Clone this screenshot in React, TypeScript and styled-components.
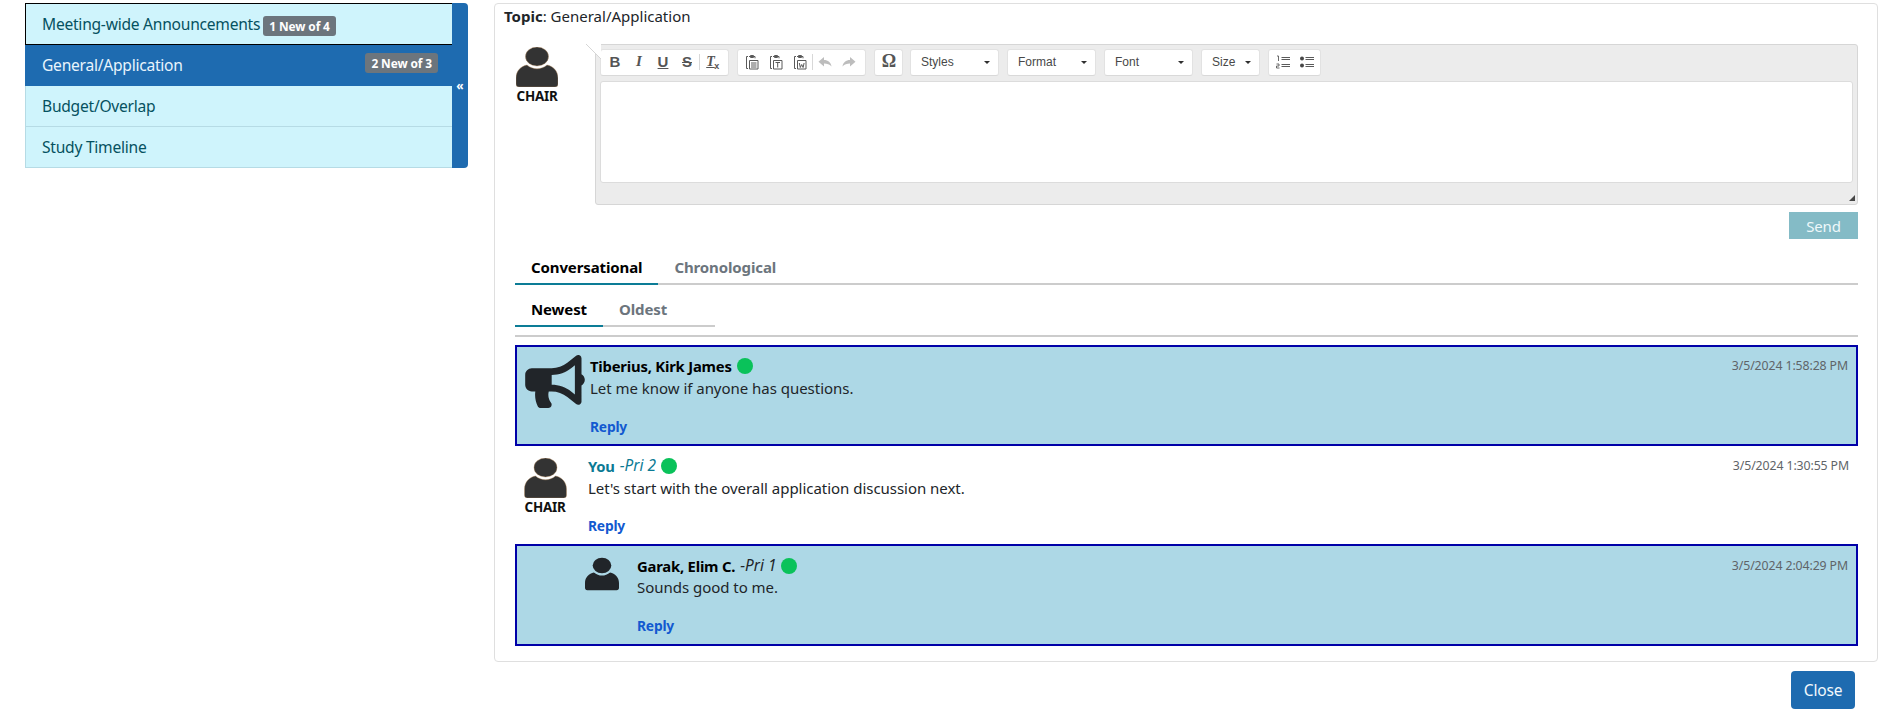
import React from "react";
import styled, { createGlobalStyle } from "styled-components";
import { FaBullhorn } from "react-icons/fa";

const Global = createGlobalStyle`
  html, body { margin: 0; padding: 0; background: #fff; }
  body { font-family: "Noto Sans", "Open Sans", sans-serif; color: #212529; font-size: 15px; }
  * { box-sizing: border-box; }
`;

const Page = styled.div`
  display: flex;
  align-items: flex-start;
  gap: 26px;
  padding: 3px 22px 0 25px;
`;
const Sidebar = styled.aside`
  display: flex;
  width: 443px;
  height: 165px;
`;
const TopicList = styled.div`
  flex: 1;
  display: flex;
  flex-direction: column;
`;
const TopicItem = styled.div<{ $active?: boolean; $focus?: boolean }>`
  height: ${p => (p.$focus ? 42 : 41)}px;
  display: flex;
  align-items: center;
  padding: 0 0 0 16px;
  font-size: 15.6px;
  letter-spacing: -0.25px;
  background: ${p => (p.$active ? "#1e6bb0" : "#cff4fc")};
  color: ${p => (p.$active ? "#e8f4fc" : "#055160")};
  border: 1px solid ${p => (p.$focus ? "#000" : p.$active ? "#1e6bb0" : "#b6dbe5")};
  border-top-width: ${p => (p.$focus ? 1 : 0)}px;
  border-right-width: 0;
  gap: 3px;
  justify-content: ${p => (p.$active ? "space-between" : "flex-start")};
`;
const Badge = styled.span<{ $inset?: boolean }>`
  display: inline-block;
  background: #6c757d;
  color: #fff;
  font-weight: 700;
  font-size: 11.9px;
  letter-spacing: -0.1px;
  line-height: 20px;
  height: 20px;
  padding: 0 6px;
  border-radius: 3px;
  margin: ${p => (p.$inset ? "-4px 14px 0 0" : "3px 0 0 0")};
`;
const Rail = styled.button`
  width: 16px;
  border: 0;
  padding: 0;
  background: #1e6bb0;
  color: #fff;
  border-radius: 0 4px 4px 0;
  font: 700 12px "Noto Sans", sans-serif;
  line-height: 1;
`;
const Main = styled.main`
  flex: 1;
  min-width: 0;
`;
const Panel = styled.section`
  height: 659px;
  border: 1px solid #dfdfdf;
  border-radius: 4px;
  padding: 0 19px 0 20px;
`;
const Topic = styled.div`
  height: 40px;
  padding: 2px 0 0 0;
  margin-left: -11px;
  font-size: 15px;
  line-height: 20px;
`;
const ComposeRow = styled.div`
  display: flex;
`;
const ChairBlock = styled.div`
  width: 80px;
  flex: none;
  padding-top: 3px;
`;
const ChairInner = styled.div<{ $mt?: number; $ml?: number }>`
  width: 42px;
  margin: ${p => p.$mt ?? 0}px 0 0 ${p => p.$ml ?? 1}px;
  display: flex;
  flex-direction: column;
  align-items: center;
`;
const ChairLabel = styled.div`
  font-weight: 700;
  font-size: 13.4px;
  letter-spacing: -0.25px;
  line-height: 14px;
  color: #111;
  margin-top: 2px;
`;
const Editor = styled.div`
  position: relative;
  flex: 1;
  height: 161px;
  background: #ececec;
  border: 1px solid #d6d6d6;
  border-radius: 3px;
  padding: 4px 4px 0 4px;
  display: flex;
  flex-direction: column;
`;
const Tip = styled.div`
  position: absolute;
  left: -11px;
  top: -1px;
  width: 16px;
  height: 15px;
  background: linear-gradient(45deg, transparent 49%, #d6d6d6 49%, #d6d6d6 53%, #fff 53%);
`;
const Toolbar = styled.div`
  display: flex;
  gap: 8px;
  height: 27px;
`;
const Group = styled.div<{ $w: number }>`
  width: ${p => p.$w}px;
  height: 27px;
  background: #fff;
  border: 1px solid #e2e2e2;
  border-bottom-color: #d9d9d9;
  border-radius: 3px;
  display: flex;
  align-items: center;
  padding: 0 0 2px 2px;
`;
const Tool = styled.span<{ $faded?: boolean }>`
  width: 24px;
  height: 23px;
  flex: none;
  display: flex;
  align-items: center;
  justify-content: center;
  color: ${p => (p.$faded ? "#bdbdbd" : "#555")};
`;
const Glyph = styled.span<{ $u?: boolean; $s?: boolean }>`
  font: 700 15px "Liberation Sans", sans-serif;
  text-decoration: ${p => (p.$u ? "underline" : p.$s ? "line-through" : "none")};
`;
const SlabGlyph = styled.span`
  font: italic 700 15px "Liberation Serif", serif;
`;
const ClearGlyph = styled.span`
  font: italic 700 14px "Liberation Serif", serif;
  position: relative;
  text-decoration: underline;
  margin-right: 3px;
  & > sub {
    position: absolute;
    left: 8px;
    top: 7px;
    font: 700 9px "Liberation Sans", sans-serif;
    text-decoration: none;
    display: inline-block;
  }
`;
const Omega = styled.span`
  font: 700 18px "Liberation Serif", serif;
  color: #555;
`;
const Sep = styled.span`
  width: 1px;
  height: 16px;
  background: #d8d8d8;
  flex: none;
`;
const Combo = styled.div<{ $w: number; $first?: boolean }>`
  width: ${p => p.$w}px;
  height: 27px;
  margin-left: ${p => (p.$first ? -1 : 0)}px;
  background: #fff;
  border: 1px solid #e2e2e2;
  border-bottom-color: #d9d9d9;
  border-radius: 3px;
  display: flex;
  align-items: center;
  justify-content: space-between;
  padding: 0 8px 2px 10px;
  font: 12px "Liberation Sans", sans-serif;
  color: #484848;
  &::after {
    content: "";
    margin-top: 2px;
    border-left: 3px solid transparent;
    border-right: 3px solid transparent;
    border-top: 3px solid #2f2f2f;
  }
`;
const EditArea = styled.div`
  flex: none;
  margin-top: 5px;
  height: 102px;
  background: #fff;
  border: 1px solid #dcdcdc;
  border-radius: 3px;
`;
const Resize = styled.div`
  position: absolute;
  right: 2px;
  bottom: 3px;
  width: 0;
  height: 0;
  border-left: 6px solid transparent;
  border-bottom: 6px solid #474747;
`;
const SendRow = styled.div`
  display: flex;
  justify-content: flex-end;
  margin-top: 7px;
`;
const SendButton = styled.button`
  width: 69px;
  height: 27px;
  border: 0;
  background: #84bbc6;
  color: #eef8fa;
  font: 15px "Noto Sans", sans-serif;
  letter-spacing: -0.2px;
  padding: 0;
`;
const TabBar = styled.div<{ $w?: number; $mt: number }>`
  display: flex;
  height: 28px;
  margin-top: ${p => p.$mt}px;
  width: ${p => (p.$w ? `${p.$w}px` : "auto")};
  border-bottom: 2px solid #ccc;
`;
const Tab = styled.div<{ $active?: boolean; $pb: number }>`
  height: 28px;
  padding: 0 16px ${p => p.$pb}px;
  display: flex;
  align-items: center;
  font-weight: 700;
  font-size: 15px;
  letter-spacing: -0.12px;
  color: ${p => (p.$active ? "#000" : "#6c757d")};
  border-bottom: 2px solid ${p => (p.$active ? "#0c7c96" : "transparent")};
`;
const Rule = styled.div`
  height: 2px;
  background: #ccc;
  margin-top: 8px;
  margin-bottom: 8px;
`;
const Card = styled.article<{ $hl?: boolean; $h: number; $pl: number; $pt: number }>`
  display: flex;
  height: ${p => p.$h}px;
  padding: ${p => p.$pt}px 8px 0 ${p => p.$pl}px;
  background: ${p => (p.$hl ? "#add8e6" : "#fff")};
  border: 2px solid ${p => (p.$hl ? "#0000a8" : "transparent")};
`;
const AvatarCol = styled.div<{ $w: number }>`
  width: ${p => p.$w}px;
  flex: none;
`;
const CardBody = styled.div`
  flex: 1;
  min-width: 0;
`;
const CardHead = styled.div`
  display: flex;
  justify-content: space-between;
  align-items: center;
  height: 21px;
`;
const Who = styled.div`
  display: flex;
  align-items: center;
  gap: 5px;
`;
const Name = styled.span<{ $you?: boolean }>`
  font-weight: 700;
  font-size: 14.8px;
  letter-spacing: -0.2px;
  color: ${p => (p.$you ? "#0b7a94" : "#000")};
`;
const Pri = styled.span<{ $you?: boolean }>`
  font-style: italic;
  font-size: 15.4px;
  letter-spacing: 0;
  color: ${p => (p.$you ? "#0b7a94" : "#212529")};
`;
const Dot = styled.span`
  width: 16px;
  height: 16px;
  border-radius: 50%;
  background: #0ac25a;
  flex: none;
`;
const Stamp = styled.time<{ $mr?: number }>`
  font-size: 12.3px;
  letter-spacing: -0.1px;
  color: #5f6468;
  margin-right: ${p => p.$mr ?? 0}px;
`;
const Text = styled.p<{ $mt?: number }>`
  margin: ${p => p.$mt ?? 1}px 0 0;
  font-size: 15px;
  line-height: 21px;
  letter-spacing: -0.03px;
  color: #212529;
`;
const Reply = styled.a<{ $mt?: number }>`
  display: block;
  margin-top: ${p => p.$mt ?? 17}px;
  font-weight: 700;
  font-size: 13.8px;
  line-height: 20px;
  letter-spacing: -0.2px;
  color: #1259d0;
`;
const Footer = styled.div`
  display: flex;
  justify-content: flex-end;
  padding: 9px 23px 0 0;
`;
const CloseButton = styled.button`
  width: 64px;
  height: 38px;
  border: 0;
  border-radius: 4px;
  background: #1e6bb0;
  color: #f2f8fc;
  font: 15.5px "Noto Sans", sans-serif;
  letter-spacing: -0.2px;
  padding: 0;
`;
const Horn = styled(FaBullhorn)`
  display: block;
  width: 60px;
  height: 53px;
  color: #212529;
`;

const Person = ({ w, h, color, halo }: { w: number; h: number; color: string; halo?: boolean }) => (
  <svg width={w} height={h} viewBox="0 0 42 40" style={{ display: "block" }}>
    <g fill={color} stroke={halo ? "#b88a5a" : "none"} strokeWidth={halo ? 0.4 : 0}>
      <ellipse cx="21" cy="9.500" rx="11.500" ry="9.500" />
      <path d="M11 18C14 20.500 17.500 21.800 21 21.800S28 20.500 31 18C37 19 42 24 42 31V37C42 39 41 40 39 40H3C1 40 0 39 0 37V31C0 24 5 19 11 18Z" />
    </g>
  </svg>
);

const Clip = ({ kind }: { kind: "doc" | "t" | "w" }) => (
  <svg width="14" height="16" viewBox="0 0 14 16" fill="none" stroke="#5a5a5a" strokeWidth="1">
    <path d="M3 2.500H1.500v12H3M5.500 1.500h3v2h-3z" />
    <path d="M4.500 6.500h8.500v8.500H4.500z" />
    <path d="M4 2.500h6v1.800" />
    {kind === "doc" && <path d="M6 9h5.500M6 11h5.500M6 13h5.500" />}
    {kind === "t" && <path d="M6.500 8.500h4.500M8.700 8.500v5" />}
    {kind === "w" && <path d="M6.300 9l1 4.500 1.400-3 1.400 3 1-4.500" />}
  </svg>
);

const Turn = ({ flip }: { flip?: boolean }) => (
  <svg width="14" height="12" viewBox="0 0 14 12" style={flip ? { transform: "scaleX(-1)" } : undefined}>
    <path fill="#bdbdbd" d="M6 1L0.500 5.800 6 10.500V7.500c3.200 0 5.500.8 7.500 3C13 6.500 10 4 6 4z" />
  </svg>
);

const ListIcon = ({ numbered }: { numbered?: boolean }) => (
  <svg width="14" height="14" viewBox="0 0 14 14">
    <path d="M5.500 2.500H14M5.500 4.500H14M5.500 9.500H14M5.500 11.500H14" stroke="#5a5a5a" strokeWidth="1" />
    {numbered ? (
      <path d="M1 1h1.500v5M.5 9h2.500v2H.5v2h3" fill="none" stroke="#5a5a5a" strokeWidth="0.9" />
    ) : (
      <>
        <circle cx="2" cy="3.500" r="2" fill="#474747" />
        <circle cx="2" cy="10.500" r="2" fill="#474747" />
      </>
    )}
  </svg>
);

export default function App() {
  return (
    <>
      <Global />
      <Page>
        <Sidebar>
          <TopicList>
            <TopicItem $focus>
              Meeting-wide Announcements <Badge>1 New of 4</Badge>
            </TopicItem>
            <TopicItem $active>
              General/Application <Badge $inset>2 New of 3</Badge>
            </TopicItem>
            <TopicItem>Budget/Overlap</TopicItem>
            <TopicItem>Study Timeline</TopicItem>
          </TopicList>
          <Rail>«</Rail>
        </Sidebar>
        <Main>
          <Panel>
            <Topic>
              <b>Topic</b>: General/Application
            </Topic>
            <ComposeRow>
              <ChairBlock>
                <ChairInner>
                  <Person w={42} h={40} color="#333" halo />
                  <ChairLabel>CHAIR</ChairLabel>
                </ChairInner>
              </ChairBlock>
              <Editor>
                <Tip />
                <Toolbar>
                  <Group $w={129}>
                    <Tool><Glyph>B</Glyph></Tool>
                    <Tool><SlabGlyph>I</SlabGlyph></Tool>
                    <Tool><Glyph $u>U</Glyph></Tool>
                    <Tool><Glyph $s>S</Glyph></Tool>
                    <Sep />
                    <Tool><ClearGlyph>T<sub>x</sub></ClearGlyph></Tool>
                  </Group>
                  <Group $w={129}>
                    <Tool><Clip kind="doc" /></Tool>
                    <Tool><Clip kind="t" /></Tool>
                    <Tool><Clip kind="w" /></Tool>
                    <Sep />
                    <Tool $faded><Turn /></Tool>
                    <Tool $faded><Turn flip /></Tool>
                  </Group>
                  <Group $w={29}>
                    <Tool><Omega>Ω</Omega></Tool>
                  </Group>
                  <Combo $w={89} $first>Styles</Combo>
                  <Combo $w={89}>Format</Combo>
                  <Combo $w={89}>Font</Combo>
                  <Combo $w={59}>Size</Combo>
                  <Group $w={53}>
                    <Tool><ListIcon numbered /></Tool>
                    <Tool><ListIcon /></Tool>
                  </Group>
                </Toolbar>
                <EditArea />
                <Resize />
              </Editor>
            </ComposeRow>
            <SendRow>
              <SendButton>Send</SendButton>
            </SendRow>
            <TabBar $mt={18}>
              <Tab $active $pb={6}>Conversational</Tab>
              <Tab $pb={6}>Chronological</Tab>
            </TabBar>
            <TabBar $w={200} $mt={14}>
              <Tab $active $pb={7}>Newest</Tab>
              <Tab $pb={7}>Oldest</Tab>
            </TabBar>
            <Rule />
            <Card $hl $h={101} $pl={8} $pt={8}>
              <AvatarCol $w={65}>
                <Horn />
              </AvatarCol>
              <CardBody>
                <CardHead>
                  <Who>
                    <Name>Tiberius, Kirk James</Name>
                    <Dot />
                  </Who>
                  <Stamp>3/5/2024 1:58:28 PM</Stamp>
                </CardHead>
                <Text $mt={2}>Let me know if anyone has questions.</Text>
                <Reply $mt={18}>Reply</Reply>
              </CardBody>
            </Card>
            <Card $h={98} $pl={7} $pt={7}>
              <AvatarCol $w={64}>
                <ChairInner $mt={3} $ml={0}>
                  <Person w={43} h={40} color="#333" halo />
                  <ChairLabel>CHAIR</ChairLabel>
                </ChairInner>
              </AvatarCol>
              <CardBody>
                <CardHead>
                  <Who>
                    <Name $you>You</Name>
                    <Pri $you>-Pri 2</Pri>
                    <Dot />
                  </Who>
                  <Stamp $mr={-1}>3/5/2024 1:30:55 PM</Stamp>
                </CardHead>
                <Text $mt={2}>Let's start with the overall application discussion next.</Text>
                <Reply>Reply</Reply>
              </CardBody>
            </Card>
            <Card $hl $h={102} $pl={68} $pt={9}>
              <AvatarCol $w={52}>
                <Person w={34} h={38} color="#212529" />
              </AvatarCol>
              <CardBody>
                <CardHead>
                  <Who>
                    <Name>Garak, Elim C.</Name>
                    <Pri>-Pri 1</Pri>
                    <Dot />
                  </Who>
                  <Stamp>3/5/2024 2:04:29 PM</Stamp>
                </CardHead>
                <Text>Sounds good to me.</Text>
                <Reply $mt={18}>Reply</Reply>
              </CardBody>
            </Card>
          </Panel>
          <Footer>
            <CloseButton>Close</CloseButton>
          </Footer>
        </Main>
      </Page>
    </>
  );
}
